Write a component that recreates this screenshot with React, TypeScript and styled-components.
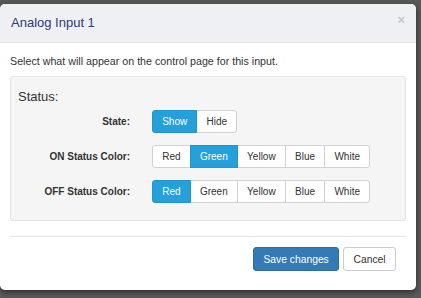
import React, { useState } from "react";
import styled, { createGlobalStyle } from "styled-components";

const Global = createGlobalStyle`
  html, body { margin: 0; padding: 0; }
  body {
    background: #5a5a5a;
    font-family: "Liberation Sans", Arial, sans-serif;
    color: #333;
  }
`;

const Backdrop = styled.div`
  width: 421px;
  height: 298px;
  padding-top: 4px;
  box-sizing: border-box;
  overflow: hidden;
`;

const Modal = styled.div`
  width: 416px;
  background: #fff;
  border-radius: 5px;
  box-shadow: 0 2px 6px rgba(0, 0, 0, 0.55);
  overflow: hidden;
`;

const Header = styled.div`
  height: 38px;
  border-bottom: 1px solid #e3e3e6;
  background: #eff0f3;
  display: flex;
  align-items: center;
  justify-content: space-between;
  padding: 0 11px 0 11px;
`;

const Title = styled.h4`
  margin: 0;
  font-size: 13px;
  font-weight: normal;
  color: #2c3b7a;
  line-height: 18px;
`;

const Close = styled.span`
  font-size: 13px;
  font-weight: bold;
  color: #c6c6c6;
  line-height: 1;
  margin-top: -8px;
`;

const Body = styled.div`
  padding: 10px 10px 0;
`;

const Intro = styled.p`
  margin: 0 0 7px;
  font-size: 10.7px;
  line-height: 16px;
  color: #333;
`;

const Well = styled.div`
  height: 145px;
  box-sizing: border-box;
  background: #f5f5f5;
  border: 1px solid #e3e3e3;
  border-radius: 3px;
  padding: 11px 7px 0;
`;

const Legend = styled.div`
  font-size: 13px;
  line-height: 18px;
  color: #333;
  margin-bottom: 4px;
`;

const Rows = styled.div`
  display: grid;
  grid-template-columns: 112px auto;
  column-gap: 22px;
  row-gap: 12px;
  align-items: center;
  justify-items: start;
`;

const Label = styled.div`
  justify-self: end;
  font-size: 10px;
  font-weight: bold;
  color: #333;
`;

const Group = styled.div`
  display: flex;
`;

const Toggle = styled.button<{ $active?: boolean }>`
  height: 23px;
  padding: 0 9.2px;
  margin: 0 0 0 -1px;
  font-family: "Liberation Sans", Arial, sans-serif;
  font-size: 10px;
  border: 1px solid ${(p) => (p.$active ? "#2195cf" : "#d2d2d2")};
  background: ${(p) => (p.$active ? "#25a0da" : "#fff")};
  color: ${(p) => (p.$active ? "#fff" : "#333")};
  position: relative;
  z-index: ${(p) => (p.$active ? 1 : 0)};
  border-radius: 0;
  cursor: pointer;
  &:first-child {
    margin-left: 0;
    border-radius: 3px 0 0 3px;
  }
  &:last-child {
    border-radius: 0 3px 3px 0;
  }
`;

const Footer = styled.div`
  margin: 15px 10px 0;
  border-top: 1px solid #e5e5e5;
  padding: 10px 10px 19px;
  display: flex;
  justify-content: flex-end;
  gap: 4px;
`;

const Action = styled.button<{ $primary?: boolean }>`
  height: 24px;
  padding: 0 9.4px;
  font-family: "Liberation Sans", Arial, sans-serif;
  font-size: 10.3px;
  border-radius: 3px;
  border: 1px solid ${(p) => (p.$primary ? "#2e6da4" : "#cccccc")};
  background: ${(p) => (p.$primary ? "#337ab7" : "#fff")};
  color: ${(p) => (p.$primary ? "#fff" : "#333")};
  cursor: pointer;
`;

const colors = ["Red", "Green", "Yellow", "Blue", "White"];

function Choice({ options, initial }: { options: string[]; initial: string }) {
  const [value, setValue] = useState(initial);
  return (
    <Group>
      {options.map((o) => (
        <Toggle key={o} $active={o === value} onClick={() => setValue(o)}>
          {o}
        </Toggle>
      ))}
    </Group>
  );
}

export default function App() {
  return (
    <>
      <Global />
      <Backdrop>
        <Modal>
          <Header>
            <Title>Analog Input 1</Title>
            <Close>×</Close>
          </Header>
          <Body>
            <Intro>Select what will appear on the control page for this input.</Intro>
            <Well>
              <Legend>Status:</Legend>
              <Rows>
                <Label>State:</Label>
                <Choice options={["Show", "Hide"]} initial="Show" />
                <Label>ON Status Color:</Label>
                <Choice options={colors} initial="Green" />
                <Label>OFF Status Color:</Label>
                <Choice options={colors} initial="Red" />
              </Rows>
            </Well>
          </Body>
          <Footer>
            <Action $primary>Save changes</Action>
            <Action>Cancel</Action>
          </Footer>
        </Modal>
      </Backdrop>
    </>
  );
}
